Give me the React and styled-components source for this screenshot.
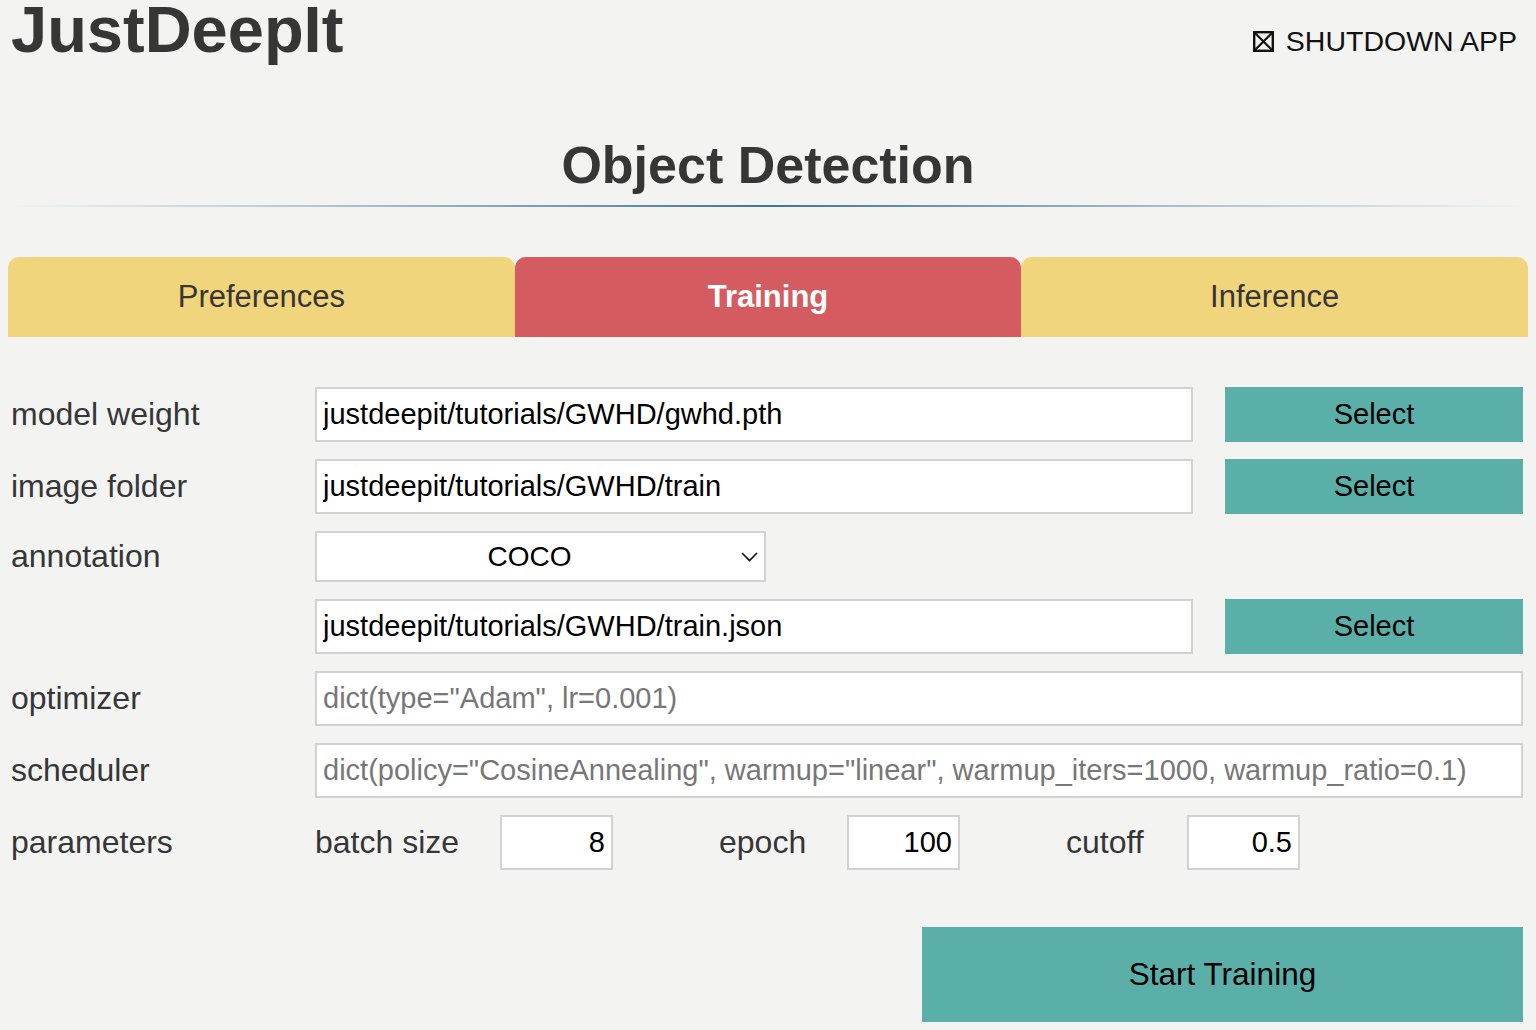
import React from "react";
import styled, { createGlobalStyle } from "styled-components";

const GlobalStyle = createGlobalStyle`
  html, body {
    margin: 0;
    padding: 0;
    background: #f3f3f2;
  }
  body {
    font-family: "Liberation Sans", Arial, Helvetica, sans-serif;
    color: #363636;
  }
  * { box-sizing: border-box; }
`;

const Page = styled.div`
  padding: 0 8px;
  min-height: 1030px;
`;

const Header = styled.header`
  display: flex;
  justify-content: space-between;
  align-items: baseline;
  padding-top: 1px;
`;

const Title = styled.h1`
  margin: 0;
  font-size: 65px;
  line-height: 58px;
  font-weight: bold;
  color: #363636;
  padding-left: 3px;
`;

const ShutdownButton = styled.button`
  display: flex;
  align-items: center;
  gap: 12px;
  background: none;
  border: none;
  padding: 0 11px 0 0;
  font-family: inherit;
  font-size: 28.5px;
  color: #111;
  cursor: pointer;
`;

const Heading = styled.h2`
  margin: 75px 0 0;
  text-align: center;
  font-size: 52px;
  line-height: 1.2;
  font-weight: bold;
  color: #363636;
`;

const Divider = styled.div`
  height: 2px;
  margin-top: 9px;
  background: linear-gradient(
    to right,
    rgba(59, 120, 152, 0) 0%,
    rgba(59, 120, 152, 0.35) 20%,
    #3b7898 50%,
    rgba(59, 120, 152, 0.35) 80%,
    rgba(59, 120, 152, 0) 100%
  );
`;

const Tabs = styled.nav`
  display: flex;
  margin-top: 50px;
`;

const Tab = styled.div`
  flex: 1;
  height: 80px;
  display: flex;
  align-items: center;
  justify-content: center;
  border-radius: 11px 11px 0 0;
  font-size: 31px;
  font-weight: ${(p) => (p.$active ? "bold" : "normal")};
  background: ${(p) => (p.$active ? "#d45c60" : "#f1d57d")};
  color: ${(p) => (p.$active ? "#ffffff" : "#363636")};
`;

const Form = styled.section`
  margin-top: 50px;
  padding-right: 5px;
  display: flex;
  flex-direction: column;
  gap: 17px;
`;

const Row = styled.div`
  display: grid;
  grid-template-columns: 307px 878px 330px;
  align-items: center;
`;

const Label = styled.div`
  font-size: 32px;
  color: #363636;
  padding-left: 3px;
`;

const TextInput = styled.input`
  grid-column: ${(p) => (p.$wide ? "2 / span 2" : "2")};
  height: 55px;
  width: 100%;
  border: 2px solid #d2d2d2;
  background: #fff;
  padding: 0 6px;
  font-family: inherit;
  font-size: 29px;
  color: #000;
  outline: none;
  &::placeholder {
    color: #777;
  }
`;

const SelectButton = styled.button`
  justify-self: end;
  width: 298px;
  height: 55px;
  border: none;
  background: #5aafa9;
  font-family: inherit;
  font-size: 29px;
  color: #000;
  cursor: pointer;
`;

const SelectWrap = styled.div`
  position: relative;
  width: 451px;
  height: 51px;
`;

const Select = styled.select`
  appearance: none;
  -webkit-appearance: none;
  width: 100%;
  height: 100%;
  border: 2px solid #d2d2d2;
  background: #fff;
  border-radius: 0;
  padding: 0 24px 0 2px;
  font-family: inherit;
  font-size: 28px;
  color: #000;
  text-align: center;
  text-align-last: center;
  outline: none;
`;

const Chevron = styled.svg`
  position: absolute;
  right: 8px;
  top: 21px;
  pointer-events: none;
`;

const Params = styled.div`
  grid-column: 2 / span 2;
  display: flex;
  align-items: center;
  gap: 106px;
`;

const ParamGroup = styled.div`
  display: flex;
  align-items: center;
`;

const ParamLabel = styled.span`
  width: ${(p) => p.$w}px;
  font-size: 32px;
  color: #363636;
`;

const NumberInput = styled.input`
  width: 113px;
  height: 55px;
  border: 2px solid #d2d2d2;
  background: #fff;
  padding: 0 6px;
  text-align: right;
  font-family: inherit;
  font-size: 29px;
  color: #000;
  outline: none;
`;

const Actions = styled.div`
  display: flex;
  justify-content: flex-end;
  margin-top: 40px;
`;

const StartButton = styled.button`
  width: 601px;
  height: 95px;
  border: none;
  background: #5aafa9;
  font-family: inherit;
  font-size: 31.5px;
  color: #000;
  cursor: pointer;
`;

function BoxX() {
  return (
    <svg width="21" height="21" viewBox="0 0 21 21" fill="none" stroke="#111" strokeWidth="2.4">
      <rect x="1.2" y="1.2" width="18.6" height="18.6" />
      <path d="M2 2 L19 19 M19 2 L2 19" strokeWidth="2.2" />
    </svg>
  );
}

const params = [
  { label: "batch size", value: "8", w: 185 },
  { label: "epoch", value: "100", w: 128 },
  { label: "cutoff", value: "0.5", w: 121 },
];

export default function App() {
  return (
    <>
      <GlobalStyle />
      <Page>
        <Header>
          <Title>JustDeepIt</Title>
          <ShutdownButton>
            <BoxX />
            <span>SHUTDOWN APP</span>
          </ShutdownButton>
        </Header>

        <Heading>Object Detection</Heading>
        <Divider />

        <Tabs>
          <Tab>Preferences</Tab>
          <Tab $active>Training</Tab>
          <Tab>Inference</Tab>
        </Tabs>

        <Form>
          <Row>
            <Label>model weight</Label>
            <TextInput defaultValue="justdeepit/tutorials/GWHD/gwhd.pth" />
            <SelectButton>Select</SelectButton>
          </Row>
          <Row>
            <Label>image folder</Label>
            <TextInput defaultValue="justdeepit/tutorials/GWHD/train" />
            <SelectButton>Select</SelectButton>
          </Row>
          <Row>
            <Label>annotation</Label>
            <SelectWrap>
              <Select defaultValue="COCO">
                <option value="COCO">COCO</option>
                <option value="VOC">Pascal VOC</option>
              </Select>
              <Chevron width="17" height="10" viewBox="0 0 17 10" fill="none" stroke="#111" strokeWidth="1.6">
                <path d="M1 1 L8.5 8.5 L16 1" />
              </Chevron>
            </SelectWrap>
          </Row>
          <Row>
            <Label />
            <TextInput defaultValue="justdeepit/tutorials/GWHD/train.json" />
            <SelectButton>Select</SelectButton>
          </Row>
          <Row>
            <Label>optimizer</Label>
            <TextInput $wide placeholder={'dict(type="Adam", lr=0.001)'} />
          </Row>
          <Row>
            <Label>scheduler</Label>
            <TextInput
              $wide
              placeholder={'dict(policy="CosineAnnealing", warmup="linear", warmup_iters=1000, warmup_ratio=0.1)'}
            />
          </Row>
          <Row>
            <Label>parameters</Label>
            <Params>
              {params.map((p) => (
                <ParamGroup key={p.label}>
                  <ParamLabel $w={p.w}>{p.label}</ParamLabel>
                  <NumberInput defaultValue={p.value} />
                </ParamGroup>
              ))}
            </Params>
          </Row>
          <Actions>
            <StartButton>Start Training</StartButton>
          </Actions>
        </Form>
      </Page>
    </>
  );
}
